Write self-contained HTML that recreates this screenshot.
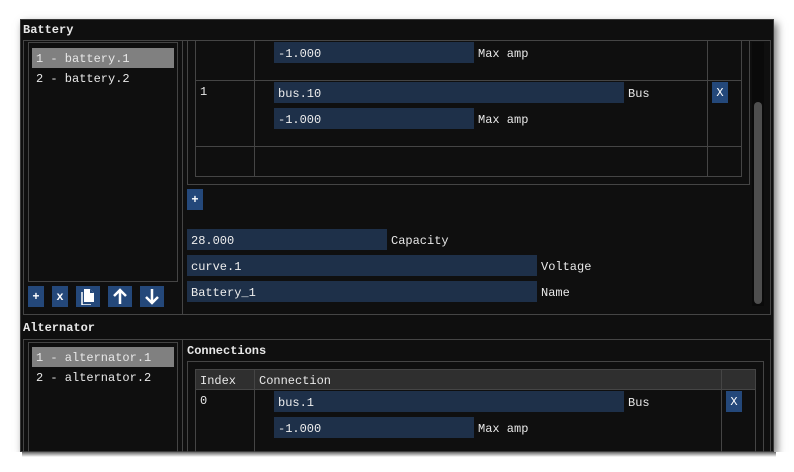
<!DOCTYPE html>
<html><head><style>
*{margin:0;padding:0;box-sizing:border-box}
body{width:794px;height:472px;background:#fff;position:relative;overflow:hidden;font-family:"Liberation Mono","DejaVu Sans Mono",monospace;font-size:12px;color:#e8e8e8}
.a{position:absolute}
.win{left:20px;top:19px;width:754px;height:433px;background:#0f0f0f;box-shadow:3px 4px 8px rgba(0,0,0,.55);border:1px solid #3a3a3a}
.bx{position:absolute;border:1px solid #454545}
.in{position:absolute;background:#1e3049;height:21px;line-height:24px;padding-left:4px;color:#eee}
.lb{position:absolute;line-height:24px}
.bt{position:absolute;background:#24487a;color:#fff;text-align:center;line-height:22px;height:21px;font-weight:bold}
.ln{position:absolute;background:#454545}
.t{position:absolute;line-height:22px;font-weight:bold}
</style></head><body>
<div class="a win"></div>
<div class="t" style="left:23px;top:19px">Battery</div>
<div class="bx" style="left:187px;top:38px;width:563px;height:147px;border-top:none"></div>
<div class="bx" style="left:195px;top:38px;width:547px;height:139px;border-top:none"></div>
<div class="a" style="left:184px;top:36px;width:580px;height:4px;background:#0f0f0f"></div>
<div class="bx" style="left:23px;top:40px;width:748px;height:275px"></div>
<div class="bx" style="left:28px;top:42px;width:150px;height:240px"></div>
<div class="a" style="left:32px;top:48px;width:142px;height:20px;background:#808080"></div>
<div class="t" style="left:36px;top:48px;font-weight:normal">1 - battery.1</div>
<div class="t" style="left:36px;top:68px;font-weight:normal">2 - battery.2</div>
<div class="bt" style="left:28px;top:286px;width:16px">+</div>
<div class="bt" style="left:52px;top:286px;width:16px">x</div>
<div class="bt" style="left:76px;top:286px;width:24px"><svg width="14" height="16" viewBox="0 0 14 16" style="margin-top:3px"><path d="M3 0h6l4 4v9H3z" fill="#fff"/><path d="M1 3v13h9" stroke="#fff" stroke-width="1.5" fill="none"/><path d="M9 0v4h4" fill="#24487a"/></svg></div>
<div class="bt" style="left:108px;top:286px;width:24px"><svg width="16" height="17" viewBox="0 0 16 17" style="margin-top:2px"><path d="M8 16V2M2 8l6-6 6 6" stroke="#fff" stroke-width="2.5" fill="none"/></svg></div>
<div class="bt" style="left:140px;top:286px;width:24px"><svg width="16" height="17" viewBox="0 0 16 17" style="margin-top:2px"><path d="M8 1v14M2 9l6 6 6-6" stroke="#fff" stroke-width="2.5" fill="none"/></svg></div>
<div class="ln" style="left:182px;top:41px;width:1px;height:273px"></div>
<div class="ln" style="left:254px;top:41px;width:1px;height:135px"></div>
<div class="ln" style="left:707px;top:41px;width:1px;height:135px"></div>
<div class="ln" style="left:195px;top:80px;width:547px;height:1px"></div>
<div class="ln" style="left:195px;top:146px;width:547px;height:1px"></div>
<div class="in" style="left:274px;top:42px;width:200px">-1.000</div><div class="lb" style="left:478px;top:42px">Max amp</div>
<div class="lb" style="left:200px;top:82px;line-height:20px">1</div>
<div class="in" style="left:274px;top:82px;width:350px">bus.10</div><div class="lb" style="left:628px;top:82px">Bus</div>
<div class="bt" style="left:712px;top:82px;width:16px;font-weight:normal">X</div>
<div class="in" style="left:274px;top:108px;width:200px">-1.000</div><div class="lb" style="left:478px;top:108px">Max amp</div>
<div class="a" style="left:752px;top:42px;width:12px;height:264px;background:#0a0a0a"></div>
<div class="a" style="left:754px;top:102px;width:8px;height:202px;background:#4e4e4e;border-radius:4px"></div>
<div class="bt" style="left:187px;top:189px;width:16px">+</div>
<div class="in" style="left:187px;top:229px;width:200px">28.000</div><div class="lb" style="left:391px;top:229px">Capacity</div>
<div class="in" style="left:187px;top:255px;width:350px">curve.1</div><div class="lb" style="left:541px;top:255px">Voltage</div>
<div class="in" style="left:187px;top:281px;width:350px">Battery_1</div><div class="lb" style="left:541px;top:281px">Name</div>
<div class="t" style="left:23px;top:317px">Alternator</div>
<div class="bx" style="left:23px;top:339px;width:748px;height:120px"></div>
<div class="bx" style="left:28px;top:342px;width:150px;height:120px"></div>
<div class="a" style="left:32px;top:347px;width:142px;height:20px;background:#808080"></div>
<div class="t" style="left:36px;top:347px;font-weight:normal">1 - alternator.1</div>
<div class="t" style="left:36px;top:367px;font-weight:normal">2 - alternator.2</div>
<div class="ln" style="left:182px;top:340px;width:1px;height:112px"></div>
<div class="t" style="left:187px;top:340px">Connections</div>
<div class="bx" style="left:187px;top:361px;width:577px;height:100px"></div>
<div class="a" style="left:195px;top:369px;width:561px;height:21px;background:#2f2f2f;border:1px solid #454545"></div>
<div class="bx" style="left:195px;top:369px;width:561px;height:90px"></div>
<div class="ln" style="left:254px;top:369px;width:1px;height:83px"></div>
<div class="ln" style="left:721px;top:369px;width:1px;height:83px"></div>
<div class="lb" style="left:200px;top:369px">Index</div>
<div class="lb" style="left:259px;top:369px">Connection</div>
<div class="lb" style="left:200px;top:391px;line-height:20px">0</div>
<div class="in" style="left:274px;top:391px;width:350px">bus.1</div><div class="lb" style="left:628px;top:391px">Bus</div>
<div class="bt" style="left:726px;top:391px;width:16px;font-weight:normal">X</div>
<div class="in" style="left:274px;top:417px;width:200px">-1.000</div><div class="lb" style="left:478px;top:417px">Max amp</div>
<div class="a" style="left:0;top:452px;width:794px;height:20px;background:#fff"></div>
<div class="a" style="left:22px;top:452px;width:754px;height:5px;background:linear-gradient(#666,#fff)"></div>
</body></html>
